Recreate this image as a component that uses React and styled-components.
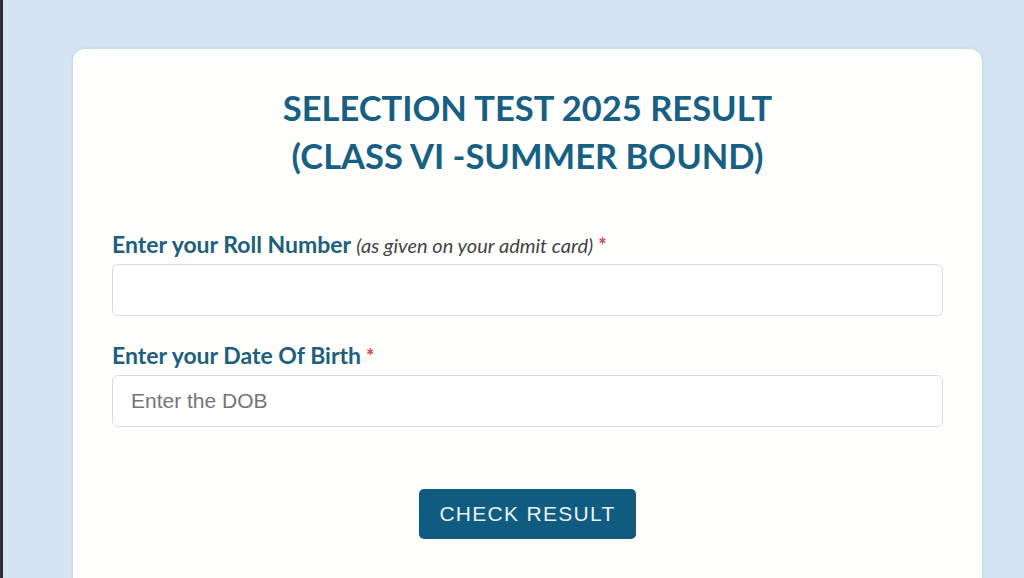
import React from 'react';
import styled, { createGlobalStyle } from 'styled-components';

const GlobalStyle = createGlobalStyle`
  html, body {
    margin: 0;
    padding: 0;
    height: 100%;
    overflow: hidden;
  }
  body {
    background: #d4e4f2;
    font-family: Lato, "Open Sans", sans-serif;
  }
`;

const Page = styled.div`
  height: 578px;
  border-left: 3px solid #2b2f33;
  padding: 49px 42px 0 70px;
  box-sizing: border-box;
`;

const Card = styled.div`
  background: #fefefd;
  border-radius: 12px;
  padding: 35px 39px 60px;
  box-shadow: 0 0 3px rgba(120, 140, 160, 0.25);
  height: 600px;
  box-sizing: border-box;
`;

const Title = styled.h1`
  margin: 0 0 51px;
  text-align: center;
  color: #176083;
  font-family: Lato, sans-serif;
  font-weight: 700;
  font-size: 34.5px;
  line-height: 48px;
`;

const Field = styled.div`
  margin-bottom: 26px;
`;

const Label = styled.label`
  display: block;
  color: #1d5f7c;
  font-weight: 700;
  font-size: 23px;
  line-height: 26px;
  margin-bottom: 6px;
`;

const Hint = styled.em`
  font-weight: 400;
  font-size: 20px;
  color: #444;
`;

const Star = styled.span`
  color: #d9414d;
  font-size: 20px;
  font-weight: 700;
  margin-left: 5px;
`;

const Input = styled.input`
  display: block;
  width: 100%;
  box-sizing: border-box;
  height: 52px;
  border: 1px solid #dcdcdc;
  border-radius: 6px;
  background: #fff;
  padding: 0 18px;
  font-family: "Liberation Sans", Arial, sans-serif;
  font-size: 21px;
  color: #333;
  outline: none;

  ::placeholder {
    color: #777;
  }
`;

const Actions = styled.div`
  display: flex;
  justify-content: center;
  padding-top: 36px;
`;

const Button = styled.button`
  background: #0f5c80;
  color: #e9f1f5;
  border: none;
  border-radius: 5px;
  width: 217px;
  height: 50px;
  font-family: "Liberation Sans", Arial, sans-serif;
  font-size: 21px;
  letter-spacing: 1.3px;
  cursor: pointer;
`;

const App = () => (
  <>
    <GlobalStyle />
    <Page>
      <Card>
        <Title>
          SELECTION TEST 2025 RESULT
          <br />
          (CLASS VI -SUMMER BOUND)
        </Title>
        <Field>
          <Label>
            Enter your Roll Number <Hint>(as given on your admit card)</Hint>
            <Star>*</Star>
          </Label>
          <Input type="text" />
        </Field>
        <Field>
          <Label>
            Enter your Date Of Birth<Star>*</Star>
          </Label>
          <Input type="text" placeholder="Enter the DOB" />
        </Field>
        <Actions>
          <Button type="button">CHECK RESULT</Button>
        </Actions>
      </Card>
    </Page>
  </>
);

export default App;
